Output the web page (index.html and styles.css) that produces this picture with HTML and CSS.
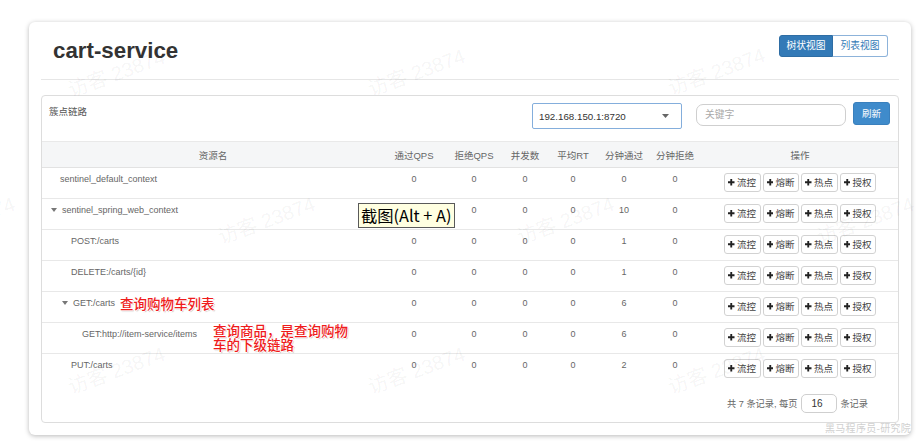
FILE: index.html
```html
<!DOCTYPE html>
<html lang="zh">
<head>
<meta charset="utf-8">
<title>cart-service</title>
<link rel="stylesheet" href="styles.css">
</head>
<body>
<div class="page">
  <div class="card">
    <div class="card-head">
      <h1 class="title">cart-service</h1>
      <div class="view-toggle">
        <span class="vt-btn vt-active">树状视图</span><span class="vt-btn">列表视图</span>
      </div>
    </div>
    <div class="panel">
      <div class="panel-head">
        <div class="panel-title">簇点链路</div>
        <div class="machine-select">
          <span>192.168.150.1:8720</span>
          <svg class="caret" width="7" height="4" viewBox="0 0 7 4"><path d="M0 0H7L3.5 4Z" fill="#666"/></svg>
        </div>
        <div class="search">关键字</div>
        <span class="btn-refresh">刷新</span>
      </div>
      <table class="tree">
        <colgroup>
          <col class="c-name"><col class="c-60"><col class="c-60"><col class="c-42"><col class="c-54"><col class="c-48"><col class="c-54"><col class="c-ops">
        </colgroup>
        <thead>
          <tr><th>资源名</th><th>通过QPS</th><th>拒绝QPS</th><th>并发数</th><th>平均RT</th><th>分钟通过</th><th>分钟拒绝</th><th>操作</th></tr>
        </thead>
        <tbody>
          <tr>
            <td class="name"><span class="leaf"></span>sentinel_default_context</td>
            <td>0</td><td>0</td><td>0</td><td>0</td><td>0</td><td>0</td>
            <td class="ops"><div class="ops-wrap"><span class="op"><svg class="plus" viewBox="0 0 7 7"><path d="M2.5 0H4.5V2.5H7V4.5H4.5V7H2.5V4.5H0V2.5H2.5Z"/></svg>流控</span><span class="op"><svg class="plus" viewBox="0 0 7 7"><path d="M2.5 0H4.5V2.5H7V4.5H4.5V7H2.5V4.5H0V2.5H2.5Z"/></svg>熔断</span><span class="op"><svg class="plus" viewBox="0 0 7 7"><path d="M2.5 0H4.5V2.5H7V4.5H4.5V7H2.5V4.5H0V2.5H2.5Z"/></svg>热点</span><span class="op"><svg class="plus" viewBox="0 0 7 7"><path d="M2.5 0H4.5V2.5H7V4.5H4.5V7H2.5V4.5H0V2.5H2.5Z"/></svg>授权</span></div></td>
          </tr>
          <tr>
            <td class="name"><span class="toggle"></span>sentinel_spring_web_context</td>
            <td>0</td><td>0</td><td>0</td><td>0</td><td>10</td><td>0</td>
            <td class="ops"><div class="ops-wrap"><span class="op"><svg class="plus" viewBox="0 0 7 7"><path d="M2.5 0H4.5V2.5H7V4.5H4.5V7H2.5V4.5H0V2.5H2.5Z"/></svg>流控</span><span class="op"><svg class="plus" viewBox="0 0 7 7"><path d="M2.5 0H4.5V2.5H7V4.5H4.5V7H2.5V4.5H0V2.5H2.5Z"/></svg>熔断</span><span class="op"><svg class="plus" viewBox="0 0 7 7"><path d="M2.5 0H4.5V2.5H7V4.5H4.5V7H2.5V4.5H0V2.5H2.5Z"/></svg>热点</span><span class="op"><svg class="plus" viewBox="0 0 7 7"><path d="M2.5 0H4.5V2.5H7V4.5H4.5V7H2.5V4.5H0V2.5H2.5Z"/></svg>授权</span></div></td>
          </tr>
          <tr>
            <td class="name lvl1"><span class="leaf"></span>POST:/carts</td>
            <td>0</td><td>0</td><td>0</td><td>0</td><td>1</td><td>0</td>
            <td class="ops"><div class="ops-wrap"><span class="op"><svg class="plus" viewBox="0 0 7 7"><path d="M2.5 0H4.5V2.5H7V4.5H4.5V7H2.5V4.5H0V2.5H2.5Z"/></svg>流控</span><span class="op"><svg class="plus" viewBox="0 0 7 7"><path d="M2.5 0H4.5V2.5H7V4.5H4.5V7H2.5V4.5H0V2.5H2.5Z"/></svg>熔断</span><span class="op"><svg class="plus" viewBox="0 0 7 7"><path d="M2.5 0H4.5V2.5H7V4.5H4.5V7H2.5V4.5H0V2.5H2.5Z"/></svg>热点</span><span class="op"><svg class="plus" viewBox="0 0 7 7"><path d="M2.5 0H4.5V2.5H7V4.5H4.5V7H2.5V4.5H0V2.5H2.5Z"/></svg>授权</span></div></td>
          </tr>
          <tr>
            <td class="name lvl1"><span class="leaf"></span>DELETE:/carts/{id}</td>
            <td>0</td><td>0</td><td>0</td><td>0</td><td>1</td><td>0</td>
            <td class="ops"><div class="ops-wrap"><span class="op"><svg class="plus" viewBox="0 0 7 7"><path d="M2.5 0H4.5V2.5H7V4.5H4.5V7H2.5V4.5H0V2.5H2.5Z"/></svg>流控</span><span class="op"><svg class="plus" viewBox="0 0 7 7"><path d="M2.5 0H4.5V2.5H7V4.5H4.5V7H2.5V4.5H0V2.5H2.5Z"/></svg>熔断</span><span class="op"><svg class="plus" viewBox="0 0 7 7"><path d="M2.5 0H4.5V2.5H7V4.5H4.5V7H2.5V4.5H0V2.5H2.5Z"/></svg>热点</span><span class="op"><svg class="plus" viewBox="0 0 7 7"><path d="M2.5 0H4.5V2.5H7V4.5H4.5V7H2.5V4.5H0V2.5H2.5Z"/></svg>授权</span></div></td>
          </tr>
          <tr>
            <td class="name lvl1"><span class="toggle"></span>GET:/carts</td>
            <td>0</td><td>0</td><td>0</td><td>0</td><td>6</td><td>0</td>
            <td class="ops"><div class="ops-wrap"><span class="op"><svg class="plus" viewBox="0 0 7 7"><path d="M2.5 0H4.5V2.5H7V4.5H4.5V7H2.5V4.5H0V2.5H2.5Z"/></svg>流控</span><span class="op"><svg class="plus" viewBox="0 0 7 7"><path d="M2.5 0H4.5V2.5H7V4.5H4.5V7H2.5V4.5H0V2.5H2.5Z"/></svg>熔断</span><span class="op"><svg class="plus" viewBox="0 0 7 7"><path d="M2.5 0H4.5V2.5H7V4.5H4.5V7H2.5V4.5H0V2.5H2.5Z"/></svg>热点</span><span class="op"><svg class="plus" viewBox="0 0 7 7"><path d="M2.5 0H4.5V2.5H7V4.5H4.5V7H2.5V4.5H0V2.5H2.5Z"/></svg>授权</span></div></td>
          </tr>
          <tr>
            <td class="name lvl2"><span class="leaf"></span>GET:http://item-service/items</td>
            <td>0</td><td>0</td><td>0</td><td>0</td><td>6</td><td>0</td>
            <td class="ops"><div class="ops-wrap"><span class="op"><svg class="plus" viewBox="0 0 7 7"><path d="M2.5 0H4.5V2.5H7V4.5H4.5V7H2.5V4.5H0V2.5H2.5Z"/></svg>流控</span><span class="op"><svg class="plus" viewBox="0 0 7 7"><path d="M2.5 0H4.5V2.5H7V4.5H4.5V7H2.5V4.5H0V2.5H2.5Z"/></svg>熔断</span><span class="op"><svg class="plus" viewBox="0 0 7 7"><path d="M2.5 0H4.5V2.5H7V4.5H4.5V7H2.5V4.5H0V2.5H2.5Z"/></svg>热点</span><span class="op"><svg class="plus" viewBox="0 0 7 7"><path d="M2.5 0H4.5V2.5H7V4.5H4.5V7H2.5V4.5H0V2.5H2.5Z"/></svg>授权</span></div></td>
          </tr>
          <tr>
            <td class="name lvl1"><span class="leaf"></span>PUT:/carts</td>
            <td>0</td><td>0</td><td>0</td><td>0</td><td>2</td><td>0</td>
            <td class="ops"><div class="ops-wrap"><span class="op"><svg class="plus" viewBox="0 0 7 7"><path d="M2.5 0H4.5V2.5H7V4.5H4.5V7H2.5V4.5H0V2.5H2.5Z"/></svg>流控</span><span class="op"><svg class="plus" viewBox="0 0 7 7"><path d="M2.5 0H4.5V2.5H7V4.5H4.5V7H2.5V4.5H0V2.5H2.5Z"/></svg>熔断</span><span class="op"><svg class="plus" viewBox="0 0 7 7"><path d="M2.5 0H4.5V2.5H7V4.5H4.5V7H2.5V4.5H0V2.5H2.5Z"/></svg>热点</span><span class="op"><svg class="plus" viewBox="0 0 7 7"><path d="M2.5 0H4.5V2.5H7V4.5H4.5V7H2.5V4.5H0V2.5H2.5Z"/></svg>授权</span></div></td>
          </tr>
        </tbody>
      </table>
      <div class="pager">
        <span>共 7 条记录, 每页</span>
        <span class="pager-input">16</span>
        <span>条记录</span>
      </div>
    </div>
  </div>

  <div class="watermarks">
    <span class="wm wm1">访客 23874</span>
    <span class="wm wm2">访客 23874</span>
    <span class="wm wm3">访客 23874</span>
    <span class="wm wm4">访客 23874</span>
    <span class="wm wm5">访客 23874</span>
    <span class="wm wm6">访客 23874</span>
    <span class="wm wm7">访客 23874</span>
    <span class="wm wm8">访客 23874</span>
    <span class="wm wm9">访客 23874</span>
    <span class="wm wm10">访客 23874</span>
  </div>

  <div class="tooltip">截图(Alt + A)</div>
  <div class="note note-1">查询购物车列表</div>
  <div class="note note-2">查询商品，是查询购物<br>车的下级链路</div>
  <div class="brand">黑马程序员-研究院</div>
</div>
</body>
</html>
```

FILE: styles.css
```css
* { box-sizing: border-box; }

html, body {
  margin: 0;
  padding: 0;
  background: #fff;
}

body {
  font-family: "Liberation Sans", "Noto Sans CJK SC", sans-serif;
  color: #333;
}

.page {
  position: relative;
  width: 924px;
  height: 445px;
  overflow: hidden;
  padding: 22px 13px 0 29px;
}

.card {
  width: 882px;
  background: #fff;
  border-radius: 6px;
  box-shadow: 0 1px 5px rgba(0, 0, 0, 0.28);
  padding: 0 12px 12px;
}

.card-head {
  height: 58px;
  display: flex;
  justify-content: space-between;
  align-items: flex-start;
  padding: 0 11px 0 12px;
  border-bottom: 1px solid #e6e6e6;
}

.title {
  margin: 16px 0 0;
  font-size: 22.3px;
  line-height: 26px;
  font-weight: bold;
  color: #333;
}

.view-toggle {
  margin-top: 13px;
  display: flex;
}

.vt-btn {
  height: 22px;
  width: 55px;
  font-size: 9.75px;
  line-height: 20px;
  text-align: center;
  color: #337ab7;
  background: #fff;
  border: 1px solid #8db3da;
  border-left: none;
  border-radius: 0 3px 3px 0;
}

.vt-btn.vt-active {
  width: 54px;
  color: #fff;
  background: #337ab7;
  border: 1px solid #2e6da4;
  border-radius: 3px 0 0 3px;
}

.panel {
  margin-top: 15px;
  border: 1px solid #dddddd;
  border-radius: 4px;
}

.panel-head {
  height: 45px;
  display: flex;
  align-items: flex-start;
  padding: 6px 8px 0 7px;
}

.panel-title {
  flex: 1;
  font-size: 9.5px;
  line-height: 18px;
  margin-top: 1px;
  color: #555;
}

.machine-select {
  margin-top: 1px;
  width: 150px;
  height: 26px;
  border: 1px solid #84aedc;
  border-radius: 2px;
  display: flex;
  align-items: center;
  justify-content: space-between;
  padding: 0 12px 0 6px;
  font-size: 9.75px;
  color: #333;
}

.caret { display: block; }

.search {
  margin: 2px 0 0 14px;
  width: 150px;
  height: 22px;
  border: 1px solid #cfcfcf;
  border-radius: 7px;
  font-size: 9.75px;
  line-height: 20px;
  padding-left: 8px;
  color: #aaa;
}

.btn-refresh {
  margin-left: 7px;
  width: 37px;
  height: 23px;
  border-radius: 3px;
  background: #3f8bcb;
  border: 1px solid #3a80bd;
  color: #fff;
  font-size: 9.5px;
  line-height: 21px;
  text-align: center;
}

.tree {
  width: 856px;
  border-collapse: collapse;
  table-layout: fixed;
  font-size: 9px;
  color: #666;
}

.c-name { width: 342px; }
.c-60 { width: 60px; }
.c-42 { width: 42px; }
.c-54 { width: 54px; }
.c-48 { width: 48px; }
.c-ops { width: 196px; }

.tree thead th {
  height: 26px;
  background: #f5f6f7;
  border-top: 1px solid #e9e9e9;
  border-bottom: 1px solid #e2e2e2;
  font-weight: normal;
  font-size: 9.5px;
  color: #666;
  text-align: center;
  padding: 0;
}

.tree tbody td {
  height: 31px;
  padding: 5px 0 0;
  vertical-align: top;
  line-height: 13px;
  text-align: center;
  border-bottom: 1px solid #e8e8e8;
}

.tree tbody tr:last-child td { border-bottom: none; }

.tree tbody td.name {
  text-align: left;
  padding-left: 9px;
  color: #666;
}

.tree tbody td.lvl1 { padding-left: 20px; }
.tree tbody td.lvl2 { padding-left: 31px; }

.leaf {
  display: inline-block;
  width: 9px;
}

.toggle {
  display: inline-block;
  width: 11px;
  height: 4px;
  vertical-align: 1px;
  position: relative;
}

.toggle::before {
  content: "";
  position: absolute;
  left: 0;
  top: 0;
  border-left: 3px solid transparent;
  border-right: 3px solid transparent;
  border-top: 4px solid #777;
}

.tree tbody td.ops {
  padding-top: 5px;
}

.ops-wrap {
  display: flex;
  justify-content: center;
  gap: 2px;
}

.op {
  width: 36.5px;
  height: 19px;
  border: 1px solid #d2d2d2;
  border-radius: 3px;
  background: #fff;
  display: flex;
  align-items: center;
  justify-content: center;
  gap: 2px;
  font-size: 9.5px;
  color: #444;
  line-height: 1;
}

.plus {
  width: 6.5px;
  height: 6.5px;
  fill: #222;
  flex: none;
}

.pager {
  height: 37px;
  display: flex;
  justify-content: flex-end;
  align-items: center;
  padding-right: 30px;
  font-size: 9.2px;
  color: #666;
}

.pager-input {
  margin: 0 3px 0 4px;
  width: 36px;
  height: 19px;
  border: 1px solid #cfcfcf;
  border-radius: 5px;
  padding-left: 9px;
  line-height: 17px;
  font-size: 10px;
  color: #333;
}

/* overlays */
.watermarks {
  position: absolute;
  inset: 0;
  pointer-events: none;
}

.wm {
  position: absolute;
  font-family: "Liberation Sans", "Noto Sans CJK SC", sans-serif;
  font-size: 20px;
  white-space: nowrap;
  color: rgba(0, 0, 0, 0.05);
  transform: translate(-50%, -50%) rotate(-20deg);
}

.wm1 { left: 116px; top: 72px; }
.wm2 { left: 416px; top: 71px; }
.wm3 { left: 716px; top: 70px; }
.wm4 { left: -34px; top: 219px; }
.wm5 { left: 266px; top: 219px; }
.wm6 { left: 565px; top: 219px; }
.wm7 { left: 865px; top: 219px; }
.wm8 { left: 116px; top: 369px; }
.wm9 { left: 416px; top: 369px; }
.wm10 { left: 716px; top: 369px; }

.tooltip {
  position: absolute;
  left: 358px;
  top: 203px;
  width: 97px;
  height: 25px;
  background: #ffffe1;
  border: 1px solid #5a5a5a;
  font-family: "Noto Sans CJK SC", "Liberation Sans", sans-serif;
  font-size: 16.3px;
  line-height: 22px;
  padding-left: 2px;
  color: #000;
  white-space: nowrap;
}

.note {
  position: absolute;
  font-family: "Noto Sans CJK SC", sans-serif;
  font-size: 13.5px;
  font-weight: 500;
  line-height: 14px;
  color: #ef1c1c;
  text-shadow: 1px 0 0 #fff, -1px 0 0 #fff, 0 1px 0 #fff, 0 -1px 0 #fff, 1px 1px 1px rgba(0,0,0,0.3);
  white-space: nowrap;
}

.note-1 { left: 120px; top: 296px; }
.note-2 { left: 213px; top: 323px; }

.brand {
  position: absolute;
  left: 825px;
  top: 422px;
  font-family: "Noto Sans CJK SC", sans-serif;
  font-size: 10px;
  line-height: 12px;
  color: #d0d0d0;
  letter-spacing: 0.3px;
}
```
